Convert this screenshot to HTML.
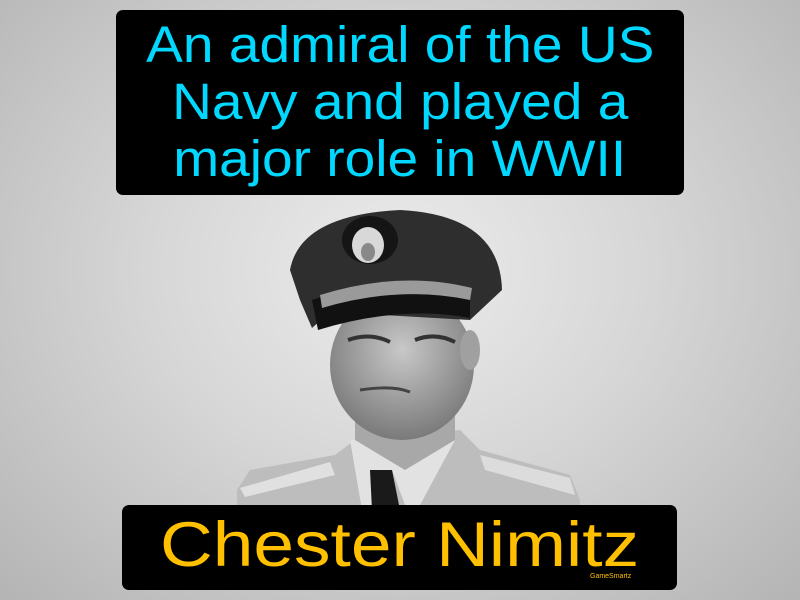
<!DOCTYPE html>
<html><head><style>
html,body{margin:0;padding:0}
body{width:800px;height:600px;overflow:hidden;position:relative;background:radial-gradient(ellipse at 50% 45%,#ececec 0%,#d6d6d6 45%,#b4b4b4 100%);font-family:"Liberation Sans",sans-serif}
.box{position:absolute;background:#000;border-radius:7px;text-align:center}
.box span{display:inline-block;transform:scaleX(1.08)}
#bot span{transform:scaleX(1.16)}
#top{left:116px;top:10px;width:568px;height:185px;color:#00d8ff;font-size:51px;line-height:57px;padding-top:6px;box-sizing:border-box}
#bot{left:122px;top:505px;width:555px;height:85px;color:#ffc000;font-size:63px;line-height:80px}
#gs{position:absolute;left:590px;top:573px;font-size:7px;color:#ffc000}
svg{position:absolute;left:0;top:0}
</style></head><body>
<svg width="800" height="600">
<defs>
<radialGradient id="f" cx="50%" cy="40%" r="60%"><stop offset="0" stop-color="#c8c8c8"/><stop offset="1" stop-color="#7a7a7a"/></radialGradient>
</defs>
<path d="M237 490 L250 470 L335 455 L355 440 L460 430 L480 450 L570 475 L580 500 L580 510 L237 510Z" fill="#bdbdbd"/>
<path d="M240 488 L330 462 L335 475 L245 497Z" fill="#e0e0e0"/>
<path d="M480 455 L570 478 L575 495 L485 470Z" fill="#dcdcdc"/>
<path d="M350 440 L362 510 L380 505 L392 470 L405 505 L420 505 L455 440 Z" fill="#e2e2e2"/>
<path d="M370 470 L392 470 L400 510 L372 510Z" fill="#1a1a1a"/>
<path d="M355 400 L455 400 L455 440 L405 470 L355 440Z" fill="#a8a8a8"/>
<ellipse cx="402" cy="365" rx="72" ry="75" fill="url(#f)"/>
<ellipse cx="470" cy="350" rx="10" ry="20" fill="#a0a0a0"/>
<path d="M348 340 Q370 332 390 342" stroke="#333" stroke-width="4" fill="none"/>
<path d="M415 340 Q435 332 455 342" stroke="#333" stroke-width="4" fill="none"/>
<path d="M360 390 Q392 385 410 392" stroke="#444" stroke-width="3" fill="none"/>
<path d="M290 270 Q300 215 400 210 Q500 215 502 290 L470 320 L330 312 L312 328 L300 300Z" fill="#2e2e2e"/>
<path d="M312 300 Q400 270 470 290 L470 318 Q400 305 318 330Z" fill="#111"/>
<path d="M320 295 Q400 270 472 288 L470 300 Q400 285 322 308Z" fill="#9a9a9a"/>
<ellipse cx="370" cy="240" rx="28" ry="24" fill="#151515"/>
<ellipse cx="368" cy="245" rx="16" ry="18" fill="#d8d8d8"/>
<ellipse cx="368" cy="252" rx="7" ry="9" fill="#888"/>
</svg>
<div id="top" class="box"><span>An admiral of the US</span><br><span>Navy and played a</span><br><span>major role in WWII</span></div>
<div id="bot" class="box"><span>Chester Nimitz</span></div>
<div id="gs">GameSmartz</div>
</body></html>
